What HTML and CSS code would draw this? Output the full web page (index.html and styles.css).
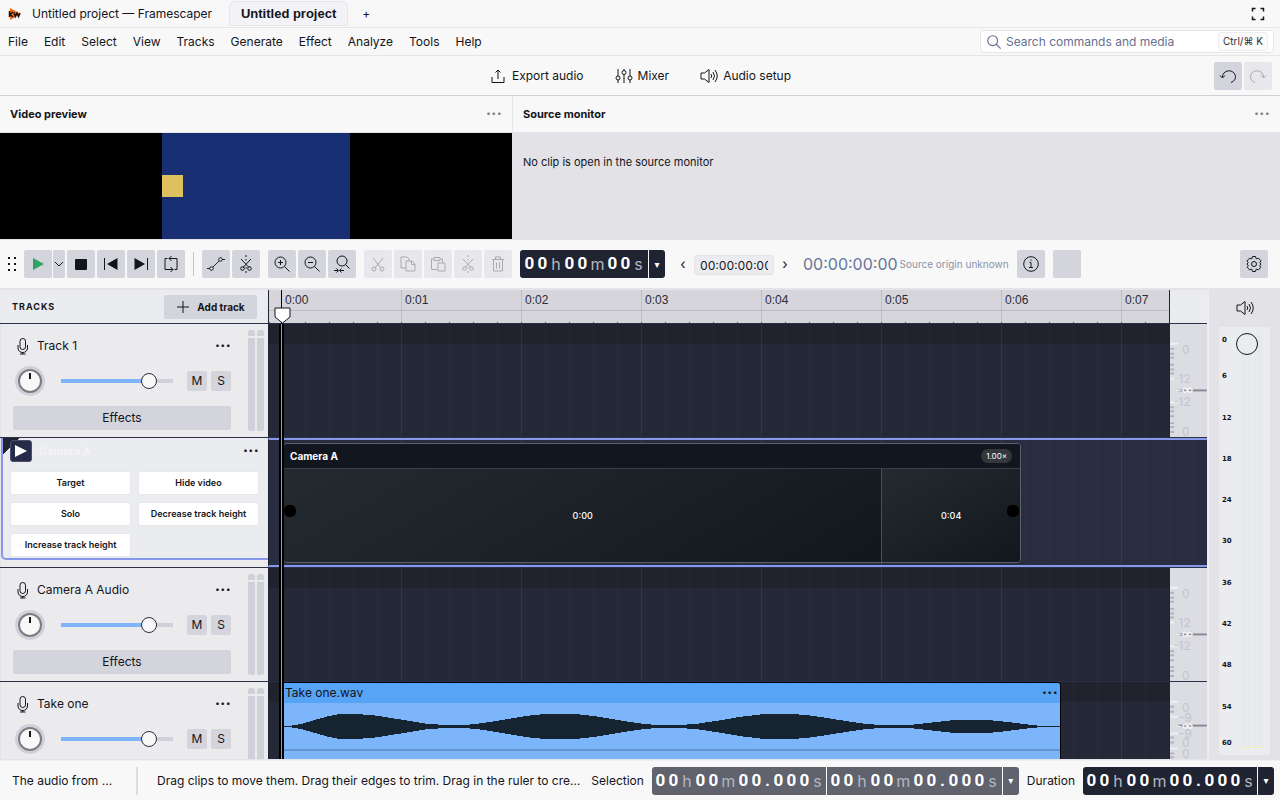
FILE: index.html
```html
<!DOCTYPE html>
<html lang="en">
<head>
<meta charset="utf-8">
<title>Untitled project — Framescaper</title>
<link rel="stylesheet" href="styles.css">
</head>
<body>
<svg class="defs" aria-hidden="true">
  <symbol id="mic" viewBox="0 0 16 18"><rect x="5" y="1.5" width="5.5" height="11" rx="2.7"/><path d="M3 8v3c0 6 9.500 6 9.500 0V8M7.700 15v2M5 17h5.500"/></symbol>
  <symbol id="speaker" viewBox="0 0 18 16"><path d="M1 5h3.500L9 1.500v13L4.500 11H1zM11 6q1.500 2 0 4M13 4q3 4 0 8M15 2q4.500 6 0 12"/></symbol>
  <symbol id="lens" viewBox="0 0 18 18"><circle cx="7.500" cy="7.500" r="5.500"/><path d="M11.500 11.500l5 5"/></symbol>
  <symbol id="scissors" viewBox="0 0 16 18"><path d="M3 3l8 10M13 3L5 13"/><circle cx="4" cy="14" r="2"/><circle cx="12" cy="14" r="2"/></symbol>
  <symbol id="split" viewBox="0 0 16 18"><path d="M3 4l8 8.500M13 4l-8 8.500M8 0v2M8 4v1.500M8 12v1.500M8 16v2"/><circle cx="4.500" cy="13.500" r="1.800"/><circle cx="11.500" cy="13.500" r="1.800"/></symbol>
</svg>

<header class="titlebar">
  <svg class="logo" viewBox="0 0 14 14"><path d="M2 1l11 6-11 6z" fill="#f26a14"/><path d="M1.500 4v6M5 5L2 7.500 5 10M6 5.500l1.300 4L9 6l1.500 3.500L12 6" fill="none" stroke="#17120f" stroke-width="1.500"/></svg>
  <span class="app-title">Untitled project — Framescaper</span>
  <button class="tab">Untitled project</button>
  <button class="new-tab" aria-label="New project">+</button>
  <button class="fullscreen" aria-label="Full screen"><svg viewBox="0 0 14 14"><path d="M1.500 4.500v-3h3M9.500 1.500h3v3M12.500 9.500v3h-3M4.500 12.500h-3v-3"/></svg></button>
</header>

<nav class="menubar">
  <button>File</button><button>Edit</button><button>Select</button><button>View</button><button>Tracks</button><button>Generate</button><button>Effect</button><button>Analyze</button><button>Tools</button><button>Help</button>
  <label class="search"><svg class="ic" viewBox="0 0 18 18"><use href="#lens"/></svg><input type="text" aria-label="Search commands and media" placeholder="Search commands and media"><kbd>Ctrl/⌘ K</kbd></label>
</nav>

<div class="actions">
  <div class="action-list">
    <button><svg class="ic" viewBox="0 0 16 16"><path d="M2 9v5.500h12V9M8 11V2M5.500 4.500L8 2l2.500 2.500"/></svg>Export audio</button>
    <button><svg class="ic" viewBox="0 0 18 16"><path d="M3 1v7M3 12v3M9 1v1.500M9 6.500V15M15 1v7M15 12v3"/><circle cx="3" cy="10" r="2"/><circle cx="9" cy="4.500" r="2"/><circle cx="15" cy="10" r="2"/></svg>Mixer</button>
    <button><svg class="ic" viewBox="0 0 18 16"><use href="#speaker"/></svg>Audio setup</button>
  </div>
  <div class="history">
    <button class="tool" aria-label="Undo"><svg class="ic" viewBox="0 0 18 18"><path d="M3.500 10A6.500 6 0 1 1 12 15.500M1 8.500l2.500 2.500L6 8.500"/></svg></button>
    <button class="tool" disabled aria-label="Redo"><svg class="ic" viewBox="0 0 18 18"><path d="M14.500 10A6.500 6 0 1 0 6 15.500M17 8.500L14.500 11 12 8.500"/></svg></button>
  </div>
</div>

<section class="monitors">
  <div class="panel preview">
    <header><h2>Video preview</h2><button class="more" aria-label="Video preview options">···</button></header>
    <div class="stage"><div class="picture"><div class="patch"></div></div></div>
  </div>
  <div class="panel source">
    <header><h2>Source monitor</h2><button class="more" aria-label="Source monitor options">···</button></header>
    <p>No clip is open in the source monitor</p>
  </div>
</section>

<section class="transport">
  <div class="group">
    <svg class="grip" viewBox="0 0 8 14"><path d="M0 1h2M6 1h2M0 7h2M6 7h2M0 13h2M6 13h2"/></svg>
  </div>
  <div class="group">
    <div class="split-button"><button class="tool" aria-label="Play"><svg viewBox="0 0 18 18"><path d="M4 3l11 6-11 6z" fill="#2fa562"/></svg></button><button class="tool narrow" aria-label="Play options"><svg class="ic" viewBox="0 0 10 18"><path d="M1 7l4 4 4-4"/></svg></button></div>
    <button class="tool" aria-label="Stop"><svg viewBox="0 0 18 18"><rect x="3" y="4" width="12" height="11" rx="1" fill="#14151a"/></svg></button>
    <button class="tool" aria-label="Skip to start"><svg class="ic" viewBox="0 0 18 18"><path d="M2.500 3v12"/><path d="M15.500 3v12L5 9z" fill="#14151a" stroke="none"/></svg></button>
    <button class="tool" aria-label="Skip to end"><svg class="ic" viewBox="0 0 18 18"><path d="M15.500 3v12"/><path d="M2.500 3v12L13 9z" fill="#14151a" stroke="none"/></svg></button>
    <button class="tool" aria-label="Loop"><svg class="ic" viewBox="0 0 18 18"><path d="M5.500 3.500H3v11h8M7 3.500h8v11h-2.500M9.500 1L7 3.500 9.500 6M8.500 12l2.500 2.500L8.500 17"/></svg></button>
  </div>
  <span class="divider"></span>
  <div class="group">
    <button class="tool" aria-label="Automation"><svg class="ic" viewBox="0 0 20 18"><path d="M0 14h3M6.500 12.500l7-7M17 4h3"/><circle cx="5" cy="14" r="2"/><circle cx="15" cy="4" r="2"/></svg></button>
    <button class="tool" aria-label="Split"><svg class="ic" viewBox="0 0 16 18"><use href="#split"/></svg></button>
  </div>
  <div class="group">
    <button class="tool" aria-label="Zoom in"><svg class="ic" viewBox="0 0 18 18"><use href="#lens"/><path d="M7.500 5v5M5 7.500h5"/></svg></button>
    <button class="tool" aria-label="Zoom out"><svg class="ic" viewBox="0 0 18 18"><use href="#lens"/><path d="M5 7.500h5"/></svg></button>
    <button class="tool" aria-label="Fit project"><svg class="ic" viewBox="0 0 18 18"><circle cx="9" cy="6" r="5"/><path d="M12.500 9.500l4 4M1 15.500h4M7 15.500h4M3.500 13.500l2 2-2 2M8.500 13.500l-2 2 2 2"/></svg></button>
  </div>
  <div class="group">
    <button class="tool" disabled aria-label="Cut"><svg class="ic" viewBox="0 0 16 18"><use href="#scissors"/></svg></button>
    <button class="tool" disabled aria-label="Copy"><svg class="ic" viewBox="0 0 18 18"><path d="M7 13H2V2h6l2 2v2M7 6h6l3 3v7H7zM12.500 6v3.500H16"/></svg></button>
    <button class="tool" disabled aria-label="Paste"><svg class="ic" viewBox="0 0 18 18"><path d="M8 14.500H2.500V4H5M11 4h2.500v4M5 2.500h6v3H5zM9 8h7v8H9z"/></svg></button>
    <button class="tool" disabled aria-label="Split and delete"><svg class="ic" viewBox="0 0 16 18"><use href="#split"/></svg></button>
    <button class="tool" disabled aria-label="Delete"><svg class="ic" viewBox="0 0 18 18"><path d="M3 4.500h12M6.500 4V2h5v2M4.500 4.500V16h9V4.500M7.500 7.500v6M10.500 7.500v6"/></svg></button>
  </div>
  <div class="timecode"><span class="digits"><b>0</b><b>0</b><i>h</i><b>0</b><b>0</b><i class="m">m</i><b>0</b><b>0</b><i class="s">s</i></span><button aria-label="Time format">▾</button></div>
  <div class="stepper"><button aria-label="Previous frame">‹</button><input type="text" aria-label="Timecode" value="00:00:00:00"><button aria-label="Next frame">›</button></div>
  <div class="origin"><output>00:00:00:00</output><span>Source origin unknown</span></div>
  <div class="group spaced">
    <button class="tool" aria-label="Information"><svg class="ic" viewBox="0 0 18 18"><circle cx="9" cy="9" r="7.300"/><path d="M7.500 7.500H9v5M7 12.500h4M9 4.500v1.300"/></svg></button>
    <button class="tool" aria-label="Playback quality"></button>
  </div>
  <button class="tool settings" aria-label="Settings"><svg class="ic" viewBox="0 0 18 18"><circle cx="9" cy="9" r="2.500"/><path d="M7.500 1.500h3l.7 2.300 2.300-.6 2.500 2.600-1.200 1.700 1.200 1.500-1.200 1.700.9 1.600-2.200 2.500-2.300-.6-.7 2.300h-3l-.7-2.300-2.300.6-2.200-2.500.9-1.600L2 9l1.200-1.500L2 5.800l2.500-2.600 2.300.6z"/></svg></button>
</section>

<main class="editor">
  <div class="arrange">
    <div class="row ruler-row">
      <div class="tracks-head"><h3>TRACKS</h3><button class="add"><svg class="ic" viewBox="0 0 14 14"><path d="M7 1v12M1 7h12"/></svg>Add track</button></div>
      <div class="ruler"><span>0:00</span><span>0:01</span><span>0:02</span><span>0:03</span><span>0:04</span><span>0:05</span><span>0:06</span><span>0:07</span></div>
      <div class="corner"></div>
    </div>

    <div class="row track">
      <div class="head">
        <div class="strip">
          <div class="name"><svg class="ic" viewBox="0 0 16 18"><use href="#mic"/></svg><span>Track 1</span><button class="more" aria-label="Track 1 options">···</button></div>
          <div class="controls"><span class="knob"></span><input type="range" aria-label="Track 1 volume" min="0" max="100" value="83"><button>M</button><button>S</button></div>
          <button class="effects">Effects</button>
        </div>
        <div class="level"><i></i><i></i></div>
      </div>
      <div class="lane"></div>
      <svg class="scale" viewBox="0 0 37 114">
        <path class="sc-light" d="M0 20h8M0 55h8M0 79h8"/>
        <path class="sc-dim" d="M0 25h4M0 30h4M0 34h4M0 41h4M0 46h4M0 50h4M0 84h4M0 88h4M0 93h4M0 100h4M0 104h4M0 109h4"/>
        <path class="sc-zero" d="M8 67h29"/>
        <text x="12" y="30">0</text><text x="3" y="60">-12</text><text class="sc-inf" x="6" y="71">-∞</text><text x="3" y="83">-12</text><text x="12" y="113">0</text>
      </svg>
    </div>

    <div class="row camera">
      <div class="head">
        <div class="selected">
          <div class="name"><span class="badge"><svg viewBox="0 0 12 12"><path d="M0 0l12 6-12 6z" fill="#fff"/></svg></span><span class="faint">Camera A</span><button class="more" aria-label="Camera A options">···</button></div>
          <div class="options"><button>Target</button><button>Hide video</button><button>Solo</button><button>Decrease track height</button><button>Increase track height</button></div>
        </div>
      </div>
      <div class="lane">
        <div class="video-clip" style="width:738px">
          <header><span>Camera A</span><small>1.00×</small></header>
          <div class="frames"><span style="flex:599">0:00</span><span style="flex:138">0:04</span></div>
          <em class="handle start"></em><em class="handle end"></em>
        </div>
      </div>
    </div>

    <div class="row track">
      <div class="head">
        <div class="strip">
          <div class="name"><svg class="ic" viewBox="0 0 16 18"><use href="#mic"/></svg><span>Camera A Audio</span><button class="more" aria-label="Camera A Audio options">···</button></div>
          <div class="controls"><span class="knob"></span><input type="range" aria-label="Camera A Audio volume" min="0" max="100" value="83"><button>M</button><button>S</button></div>
          <button class="effects">Effects</button>
        </div>
        <div class="level"><i></i><i></i></div>
      </div>
      <div class="lane"></div>
      <svg class="scale" viewBox="0 0 37 114">
        <path class="sc-light" d="M0 20h8M0 55h8M0 79h8"/>
        <path class="sc-dim" d="M0 25h4M0 30h4M0 34h4M0 41h4M0 46h4M0 50h4M0 84h4M0 88h4M0 93h4M0 100h4M0 104h4M0 109h4"/>
        <path class="sc-zero" d="M8 67h29"/>
        <text x="12" y="30">0</text><text x="3" y="60">-12</text><text class="sc-inf" x="6" y="71">-∞</text><text x="3" y="83">-12</text><text x="12" y="113">0</text>
      </svg>
    </div>

    <div class="row track">
      <div class="head">
        <div class="strip">
          <div class="name"><svg class="ic" viewBox="0 0 16 18"><use href="#mic"/></svg><span>Take one</span><button class="more" aria-label="Take one options">···</button></div>
          <div class="controls"><span class="knob"></span><input type="range" aria-label="Take one volume" min="0" max="100" value="83"><button>M</button><button>S</button></div>
        </div>
        <div class="level"><i></i><i></i></div>
      </div>
      <div class="lane">
        <div class="audio-clip" style="width:778px">
          <header><span>Take one.wav</span><button class="more" aria-label="Take one.wav options">···</button></header>
          <svg class="wave" viewBox="0 0 778 56" preserveAspectRatio="none">
            <path id="half" d="M0 24V23.500H4L20 20.500C36 16 50 10.500 66 10.500C100 10.500 136 22.500 168 22.500C208 22.500 236 10.500 277 10.500C318 10.500 348 22.500 388 22.500C428 22.500 456 10.500 497 10.500C538 10.500 570 22.500 612 22.500C638 22.500 660 16.500 690 16.500C720 16.500 742 22.500 768 23.500H778V24z"/>
            <use href="#half" transform="matrix(1 0 0 -1 0 47)"/>
            <path class="axis" d="M0 47h778"/>
          </svg>
        </div>
      </div>
      <svg class="scale" viewBox="0 0 37 114">
        <path class="sc-light" d="M0 20h8M0 35h8M0 52h8M0 67h8"/>
        <path class="sc-dim" d="M0 25h4M0 30h4M0 56h4M0 61h4M0 72h4M0 76h4"/>
        <path class="sc-zero" d="M8 44h29"/>
        <text x="12" y="30">0</text><text x="9" y="40">-9</text><text class="sc-inf" x="6" y="48">-∞</text><text x="9" y="56">-9</text><text x="12" y="66">0</text><text x="12" y="77">0</text>
      </svg>
    </div>

    <div class="playhead"><svg viewBox="0 0 17 17"><path d="M1 1h15v9l-7.500 6L1 10z"/></svg></div>
  </div>

  <aside class="master">
    <button aria-label="Master volume"><svg class="ic" viewBox="0 0 18 16"><use href="#speaker"/></svg></button>
    <div class="meter">
      <ol><li>0</li><li>6</li><li>12</li><li>18</li><li>24</li><li>30</li><li>36</li><li>42</li><li>48</li><li>54</li><li>60</li></ol>
      <div class="bar"></div><div class="bar"></div>
      <span class="master-knob"></span>
    </div>
  </aside>
</main>

<footer class="status">
  <span class="message">The audio from ...</span>
  <span class="rule"></span>
  <span class="hint">Drag clips to move them. Drag their edges to trim. Drag in the ruler to create loops.</span>
  <span class="caption">Selection</span>
  <div class="timecode muted"><span class="digits"><b>0</b><b>0</b><i>h</i><b>0</b><b>0</b><i class="m">m</i><b>0</b><b>0</b><b class="dot">.</b><b>0</b><b>0</b><b>0</b><i class="s">s</i></span><span class="digits"><b>0</b><b>0</b><i>h</i><b>0</b><b>0</b><i class="m">m</i><b>0</b><b>0</b><b class="dot">.</b><b>0</b><b>0</b><b>0</b><i class="s">s</i></span><button aria-label="Selection format">▾</button></div>
  <span class="caption">Duration</span>
  <div class="timecode"><span class="digits"><b>0</b><b>0</b><i>h</i><b>0</b><b>0</b><i class="m">m</i><b>0</b><b>0</b><b class="dot">.</b><b>0</b><b>0</b><b>0</b><i class="s">s</i></span><button aria-label="Duration format">▾</button></div>
</footer>
</body>
</html>
```

FILE: styles.css
```css
* { box-sizing: border-box; }
body {
  margin: 0;
  height: 100vh;
  overflow: hidden;
  display: flex;
  flex-direction: column;
  background: #f8f8f8;
  color: #14151a;
  font: 12px/16px Inter, sans-serif;
}
button, input { font: inherit; color: inherit; }
button { border: 0; padding: 0; background: none; white-space: nowrap; }
h2, h3, p, ol { margin: 0; padding: 0; }
.defs { position: absolute; width: 0; height: 0; }
svg { display: block; flex: none; }
.ic { fill: none; stroke: currentColor; stroke-width: 1; width: 18px; height: 18px; }

.titlebar { display: flex; align-items: center; height: 28px; padding: 0 14px 0 8px; border-bottom: 1px solid #e6e6e8; }
.logo { width: 14px; height: 14px; margin-right: 10px; }
.tab { margin-left: 17px; width: 119px; height: 25px; border: 1px solid #e6e6ea; border-radius: 6px 6px 0 0; background: #f2f2f7; font: bold 13px "Liberation Sans", sans-serif; align-self: flex-start; margin-top: 1px; }
.new-tab { width: 20px; margin-left: 8px; }
.fullscreen { margin-left: auto; }
.fullscreen svg { width: 16px; height: 14px; fill: none; stroke: #14151a; stroke-width: 1.5; }

.menubar { display: flex; align-items: center; height: 28px; padding-right: 6px; border-bottom: 1px solid #e6e6e8; }
.menubar button { padding: 0 8px; }
.search { display: flex; align-items: center; margin-left: auto; width: 294px; height: 23px; padding: 0 5px; border: 1px solid #e6e6e8; border-radius: 4px; background: #fff; color: #66708f; }
.search input { flex: 1; min-width: 0; border: 0; padding: 0 4px; background: none; }
.search input::placeholder { color: #66708f; opacity: 1; }
.search .ic { width: 16px; height: 16px; stroke-width: 1.3; }
kbd { padding: 0 4px; height: 19px; line-height: 17px; border: 1px solid #eeeef0; border-radius: 3px; background: #fbfbfb; color: #2b2d36; font-family: Inter, "DejaVu Sans", sans-serif; font-size: 10px; }

.actions { display: grid; grid-template-columns: 1fr auto 1fr; align-items: center; height: 40px; padding: 0 8px; border-bottom: 1px solid #d0d1d4; }
.action-list { grid-column: 2; display: flex; gap: 31px; }
.action-list button { display: flex; align-items: center; gap: 5px; }
.action-list .ic { width: 18px; height: 16px; }
.history { display: flex; gap: 2px; justify-self: end; }
.tool { display: grid; place-items: center; width: 28px; height: 28px; flex: none; border-radius: 2px; background: #d4d4dd; }
.tool svg { width: 18px; height: 18px; }
.tool:disabled { background: #e8e8ec; color: #a9a9b0; }

.monitors { display: grid; grid-template-columns: 2fr 3fr; height: 143px; flex: none; }
.panel { display: flex; flex-direction: column; }
.panel header { display: flex; align-items: center; justify-content: space-between; height: 37px; padding: 0 10px; border-bottom: 1px solid #e6e6e8; }
.source header { border-left: 1px solid #e6e6e8; }
h2 { font-size: 11px; font-weight: 700; }
.more { font: 500 18px/14px Inter, sans-serif; }
.panel .more { color: #7c8091; }
.stage { flex: 1; display: flex; justify-content: center; background: #000; }
.picture { display: flex; align-items: center; width: 188px; background: #182f73; }
.patch { width: 21px; height: 22px; background: #dfc05f; }
.source p { flex: 1; padding: 21px 11px; background: #e3e2e7; font-size: 11px; }

.transport { display: flex; align-items: center; gap: 8px; height: 51px; flex: none; padding: 0 12px 0 8px; border: solid #e4e4e8; border-width: 1px 0 2px; }
.group { display: flex; gap: 2px; }
.grip { width: 8px; height: 14px; stroke: #14151a; stroke-width: 2; }
.split-button { display: flex; gap: 1px; }
.narrow { width: 12px; }
.tool.narrow svg { width: 10px; }
.divider { width: 1px; height: 24px; background: #c4c4cc; }
.timecode { display: flex; gap: 1px; height: 28px; flex: none; color: #fff; }
.digits, .timecode button { display: flex; align-items: center; background: #202331; }
.digits { padding: 0 3px; border-radius: 3px 0 0 3px; }
.digits b, .digits i { width: 13px; text-align: center; font: 700 17px/26px Roboto, sans-serif; }
.digits b { padding-bottom: 2px; }
.digits i { width: 14px; font: 400 16px/28px Inter, sans-serif; color: #b4b6c0; }
.digits i.m { width: 17px; }
.digits i.s { width: 13px; }
.digits b.dot { width: 9px; }
.timecode button { justify-content: center; width: 16px; border-radius: 0 3px 3px 0; font: 10px "DejaVu Sans", sans-serif; }
.stepper { display: flex; align-items: center; gap: 1px; }
.stepper button { width: 20px; font-size: 14px; }
.stepper input { width: 80px; height: 20px; margin-top: 2px; padding: 0 5px; border: 1px solid #e4e4e8; border-radius: 3px; background: #ebecf0; font-variant-numeric: tabular-nums; }
.origin { display: flex; align-items: center; gap: 2px; white-space: nowrap; color: #66749b; }
.origin output { font-size: 16px; }
.origin span { color: #8a93a9; font-size: 10px; }
.group.spaced { gap: 8px; }
.settings { margin-left: auto; }

.editor { display: flex; flex: 1; min-height: 0; border-bottom: 1px solid #e4e4e8; }
.arrange { position: relative; flex: 1; min-width: 0; display: flex; flex-direction: column; overflow: hidden; }
.row { display: flex; flex: none; height: 114px; border-bottom: 1px solid #2c3046; }
.ruler-row { height: 34px; }
.tracks-head { display: flex; align-items: center; justify-content: space-between; width: 268px; flex: none; padding: 0 11px 0 12px; background: #ebecf0; }
h3 { font-size: 9px; font-weight: 700; letter-spacing: 1px; }
.add { display: flex; align-items: center; justify-content: center; gap: 7px; width: 93px; height: 24px; border-radius: 2px; background: #d4d4dd; font-size: 10px; font-weight: 700; }
.add .ic { width: 14px; height: 14px; }
.ruler {
  flex: 1; display: flex; overflow: hidden; padding-left: 13px; border: solid #202331; border-width: 0 1px;
  font: 12px/20px "Liberation Sans", sans-serif; color: #2b2d36;
  background:
    repeating-linear-gradient(90deg, #555866 0 1px, transparent 1px 24px) 12px 100% / 100% 1px repeat-x,
    linear-gradient(#bcbcc4, #bcbcc4) 0 20px / 100% 1px no-repeat,
    repeating-linear-gradient(90deg, #bcbcc4 0 1px, transparent 1px 120px) 12px 0 / 1200px 100%,
    #d6d5db;
}
.ruler span { width: 120px; flex: none; padding-left: 3px; }
.corner { width: 37px; background: #ebecf0; }
.head { display: flex; width: 268px; flex: none; background: #ebebee; border-left: 1px solid #e4e4e8; }
.strip { display: flex; flex-direction: column; width: 230px; padding: 10px 0 0 12px; }
.name { display: flex; align-items: center; height: 24px; }
.strip .name { padding-left: 2px; gap: 6px; }
.strip .name .ic { width: 16px; }
.name .more { margin-left: auto; }
.strip .name span { font-size: 12px; }
.controls { display: flex; align-items: center; height: 30px; margin: 8px 0 10px; }
.controls button { width: 20px; height: 20px; border-radius: 2px; background: #d4d4dd; margin-left: 4px; }
.controls input + button { margin-left: 14px; }
.knob {
  width: 24px; height: 24px; margin: 0 19px 0 5px; border-radius: 50%; border: 2px solid #7d7d80;
  background: linear-gradient(#14151a, #14151a) 9px 2px / 2px 6px no-repeat, #f8f8f8;
  box-shadow: 0 0 0 3px #d0d0da;
}
input[type="range"] { appearance: none; flex: 1; min-width: 0; height: 16px; margin: 0; background: linear-gradient(90deg, #7eb4fc 80%, #d0d0da 80%) 0 50% / 100% 4px no-repeat; }
input[type="range"]::-webkit-slider-thumb { appearance: none; width: 16px; height: 16px; border-radius: 50%; border: 1px solid #2b2d36; background: #f8f8f8; }
.effects { height: 24px; flex: none; border-radius: 2px; background: #d4d4dd; }
.strip .effects, .strip .controls { width: 218px; }
.level { display: flex; gap: 2px; margin: 6px 0 6px 17px; }
.level i { width: 7px; border-radius: 2px; background: linear-gradient(#d0d0da 6px, #ebebee 6px 8px, #d0d0da 8px); }
.lane {
  flex: 1; min-width: 0; border-left: 1px solid #202331; overflow: hidden; padding-left: 14px;
  background:
    repeating-linear-gradient(90deg, #ffffff0a 0 1px, transparent 1px 120px) 12px 0 / 1200px 100%,
    repeating-linear-gradient(90deg, #ffffff08 0 1px, transparent 1px 24px) 12px 0 / 1200px 100%,
    linear-gradient(#20222e 20px, #252836 20px);
}
.scale { width: 38px; height: 114px; margin-bottom: -1px; border-left: 1px solid #202331; background: #dcdde2; border-bottom: 1px solid #2c3046; }
.scale text { font: 12px Inter, sans-serif; fill: #c3c4ca; }
.sc-light { stroke: #f0f0f3; stroke-width: 2; }
.sc-dim { stroke: #b2b3ba; stroke-width: 2; }
.sc-zero { stroke: #888b97; stroke-width: 2; }
.scale .sc-inf { fill: #f4f4f6; font-weight: 600; }

.camera { height: 130px; }
.selected { flex: 1; height: 122px; padding: 0 9px; border: solid #8798ec; border-width: 0 0 2px 2px; border-radius: 0 0 0 5px; background: linear-gradient(135deg, #202331 12px, transparent 12px), #ebecf0; }
.selected .name { height: 26px; margin-left: -2px; gap: 7px; }
.badge { display: grid; place-items: center; width: 22px; height: 22px; border: 1px solid #4a506c; border-radius: 3px; background: #252b48; }
.badge svg { width: 12px; height: 12px; }
.faint { color: #f4f4f7; font-size: 11px; font-weight: 600; }
.options { display: grid; grid-template-columns: 1fr 1fr; gap: 7px; margin: 7px 0 0 -2px; }
.options button { height: 24px; border-radius: 3px; background: #fff; border: 1px solid #e8e8ec; font-size: 9px; font-weight: 600; }
.camera .lane {
  padding-top: 3px; border-top: 2px solid #8798ec; border-bottom: 2px solid #8798ec;
  background:
    repeating-linear-gradient(90deg, #ffffff0a 0 1px, transparent 1px 120px) 12px 0 / 1200px 100%,
    repeating-linear-gradient(90deg, #ffffff06 0 1px, transparent 1px 24px) 12px 0 / 1200px 100%,
    #292d42;
}
.video-clip { position: relative; display: flex; flex-direction: column; height: 120px; border: 1px solid #5d6067; border-radius: 4px; overflow: hidden; background: linear-gradient(160deg, #20282f, #12171d); color: #fff; }
.video-clip header { display: flex; align-items: center; justify-content: space-between; height: 25px; padding: 0 8px 0 6px; border-bottom: 1px solid #3b3f47; background: #12161f; font-size: 10px; font-weight: 700; }
small { padding: 0 5px; border-radius: 7px; background: #34373d; font: 8px/14px Inter, sans-serif; }
.frames { display: flex; flex: 1; }
.frames span { display: grid; place-items: center; background: linear-gradient(150deg, #232b31, #12171d); font-size: 9px; font-weight: 500; }
.frames span + span { border-left: 1px solid #4b4f55; }
.handle { position: absolute; top: 61px; width: 12px; height: 12px; border-radius: 5px; background: #000; }
.start { left: 0; }
.end { right: 1px; }

.audio-clip { height: 114px; border: solid #000; border-width: 1px 1px 0 0; border-radius: 0 4px 0 0; background: #7cb5fa; overflow: hidden; }
.audio-clip header { display: flex; align-items: center; justify-content: space-between; height: 20px; padding: 0 2px; background: #57a3f5; }
.wave { width: 100%; height: 56px; fill: #152430; shape-rendering: crispEdges; }
.axis { stroke: #6396d1; stroke-width: 2; }

.playhead { position: absolute; top: 0; bottom: 0; left: 274px; width: 17px; background: linear-gradient(#000, #000) 7px 0 / 1px 34px no-repeat, linear-gradient(90deg, #000 2px, #8798ec 2px 3px, #000 3px) 5px 34px / 5px 100% no-repeat; }
.playhead svg { width: 17px; height: 17px; margin-top: 17px; fill: #fff; stroke: #14151a; }

.master { display: flex; flex-direction: column; width: 73px; flex: none; padding: 8px 10px 4px; border-left: 2px solid #ededf0; background: #e3e2e7; }
.master button { display: grid; place-items: center; height: 20px; margin-bottom: 9px; }
.meter { position: relative; flex: 1; display: flex; gap: 3px; padding: 8px 7px 7px 3px; border-radius: 2px; background: #ebecf0; }
ol { display: flex; flex-direction: column; width: 17px; list-style: none; font: bold 7px/10px "DejaVu Sans", sans-serif; }
li { flex: 1; display: flex; align-items: center; }
li:first-child { flex: .5; align-items: flex-start; }
li:last-child { flex: .5; align-items: flex-end; }
.bar { width: 10px; background: #e8e9ec; border-bottom: 1px solid #f0efae; }
.master-knob { position: absolute; left: 17px; top: 6px; width: 22px; height: 22px; border: 1px solid #14151a; border-radius: 50%; background: #ebecf0; }

.status { display: flex; align-items: center; height: 40px; flex: none; padding: 0 6px 0 12px; white-space: nowrap; border-top: 1px solid #f0f0f2; }
.message { width: 124px; }
.rule { width: 2px; height: 28px; background: #dcdce2; margin-right: 19px; }
.hint { flex: 1; min-width: 0; overflow: hidden; text-overflow: ellipsis; }
.caption { margin: 0 8px; }
.hint + .caption { margin-left: 10px; }
.status .digits { padding: 0 2px; }
.muted .digits, .muted button { background: #60626e; }
.muted .digits + .digits { border-radius: 0; padding-right: 3px; }
```
